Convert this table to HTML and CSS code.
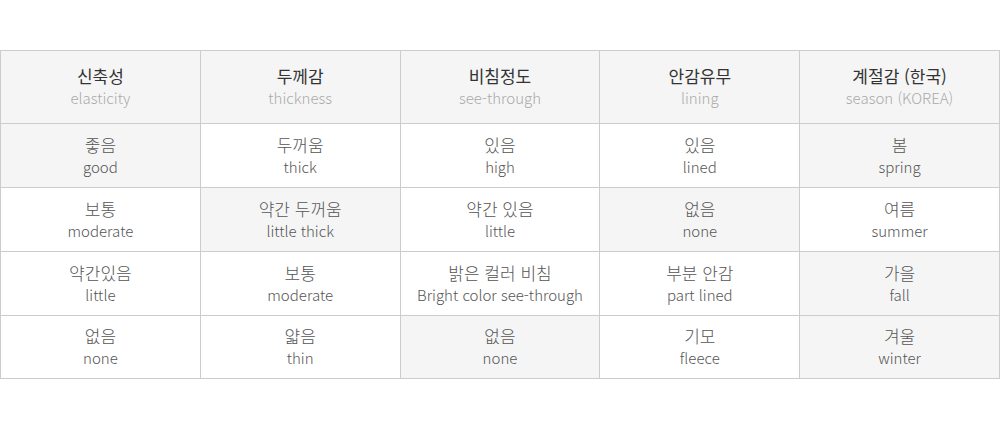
FILE: index.html
```html
<!DOCTYPE html>
<html lang="ko">
<head>
<meta charset="utf-8">
<link rel="stylesheet" href="styles.css">
</head>
<body>
<table class="spec">
  <thead>
    <tr>
      <th><span class="ko">신축성</span><span class="en">elasticity</span></th>
      <th><span class="ko">두께감</span><span class="en">thickness</span></th>
      <th><span class="ko">비침정도</span><span class="en">see-through</span></th>
      <th><span class="ko">안감유무</span><span class="en">lining</span></th>
      <th><span class="ko">계절감 (한국)</span><span class="en">season (KOREA)</span></th>
    </tr>
  </thead>
  <tbody>
    <tr>
      <td class="on"><span class="ko">좋음</span><span class="en">good</span></td>
      <td><span class="ko">두꺼움</span><span class="en">thick</span></td>
      <td><span class="ko">있음</span><span class="en">high</span></td>
      <td><span class="ko">있음</span><span class="en">lined</span></td>
      <td class="on"><span class="ko">봄</span><span class="en">spring</span></td>
    </tr>
    <tr>
      <td><span class="ko">보통</span><span class="en">moderate</span></td>
      <td class="on"><span class="ko">약간 두꺼움</span><span class="en">little thick</span></td>
      <td><span class="ko">약간 있음</span><span class="en">little</span></td>
      <td class="on"><span class="ko">없음</span><span class="en">none</span></td>
      <td><span class="ko">여름</span><span class="en">summer</span></td>
    </tr>
    <tr>
      <td><span class="ko">약간있음</span><span class="en">little</span></td>
      <td><span class="ko">보통</span><span class="en">moderate</span></td>
      <td><span class="ko">밝은 컬러 비침</span><span class="en">Bright color see-through</span></td>
      <td><span class="ko">부분 안감</span><span class="en">part lined</span></td>
      <td class="on"><span class="ko">가을</span><span class="en">fall</span></td>
    </tr>
    <tr>
      <td><span class="ko">없음</span><span class="en">none</span></td>
      <td><span class="ko">얇음</span><span class="en">thin</span></td>
      <td class="on"><span class="ko">없음</span><span class="en">none</span></td>
      <td><span class="ko">기모</span><span class="en">fleece</span></td>
      <td class="on"><span class="ko">겨울</span><span class="en">winter</span></td>
    </tr>
  </tbody>
</table>
</body>
</html>
```

FILE: styles.css
```css
html, body {
  margin: 0;
  padding: 0;
  background: #fff;
}
body {
  font-family: "Noto Sans CJK KR", "Noto Sans", sans-serif;
  color: #555;
}
.spec {
  margin-top: 50px;
  width: 1000px;
  border-collapse: collapse;
  table-layout: fixed;
}
.spec th, .spec td {
  border: 1px solid #cccccc;
  text-align: center;
  vertical-align: middle;
  padding: 0;
}
.spec th {
  height: 72px;
  background: #f5f5f5;
}
.spec td {
  height: 63px;
}
.spec tbody tr:last-child td {
  height: 62px;
}
.spec td.on {
  background: #f5f5f5;
}
.ko, .en {
  display: block;
  line-height: 22px;
}
.ko {
  font-size: 17px;
}
.en {
  font-size: 15px;
}
.spec th .ko {
  font-weight: 400;
  color: #333;
}
.spec th .en {
  font-weight: 300;
  color: #aaa;
}
.spec td .ko, .spec td .en {
  font-weight: 300;
  color: #555;
}
```
